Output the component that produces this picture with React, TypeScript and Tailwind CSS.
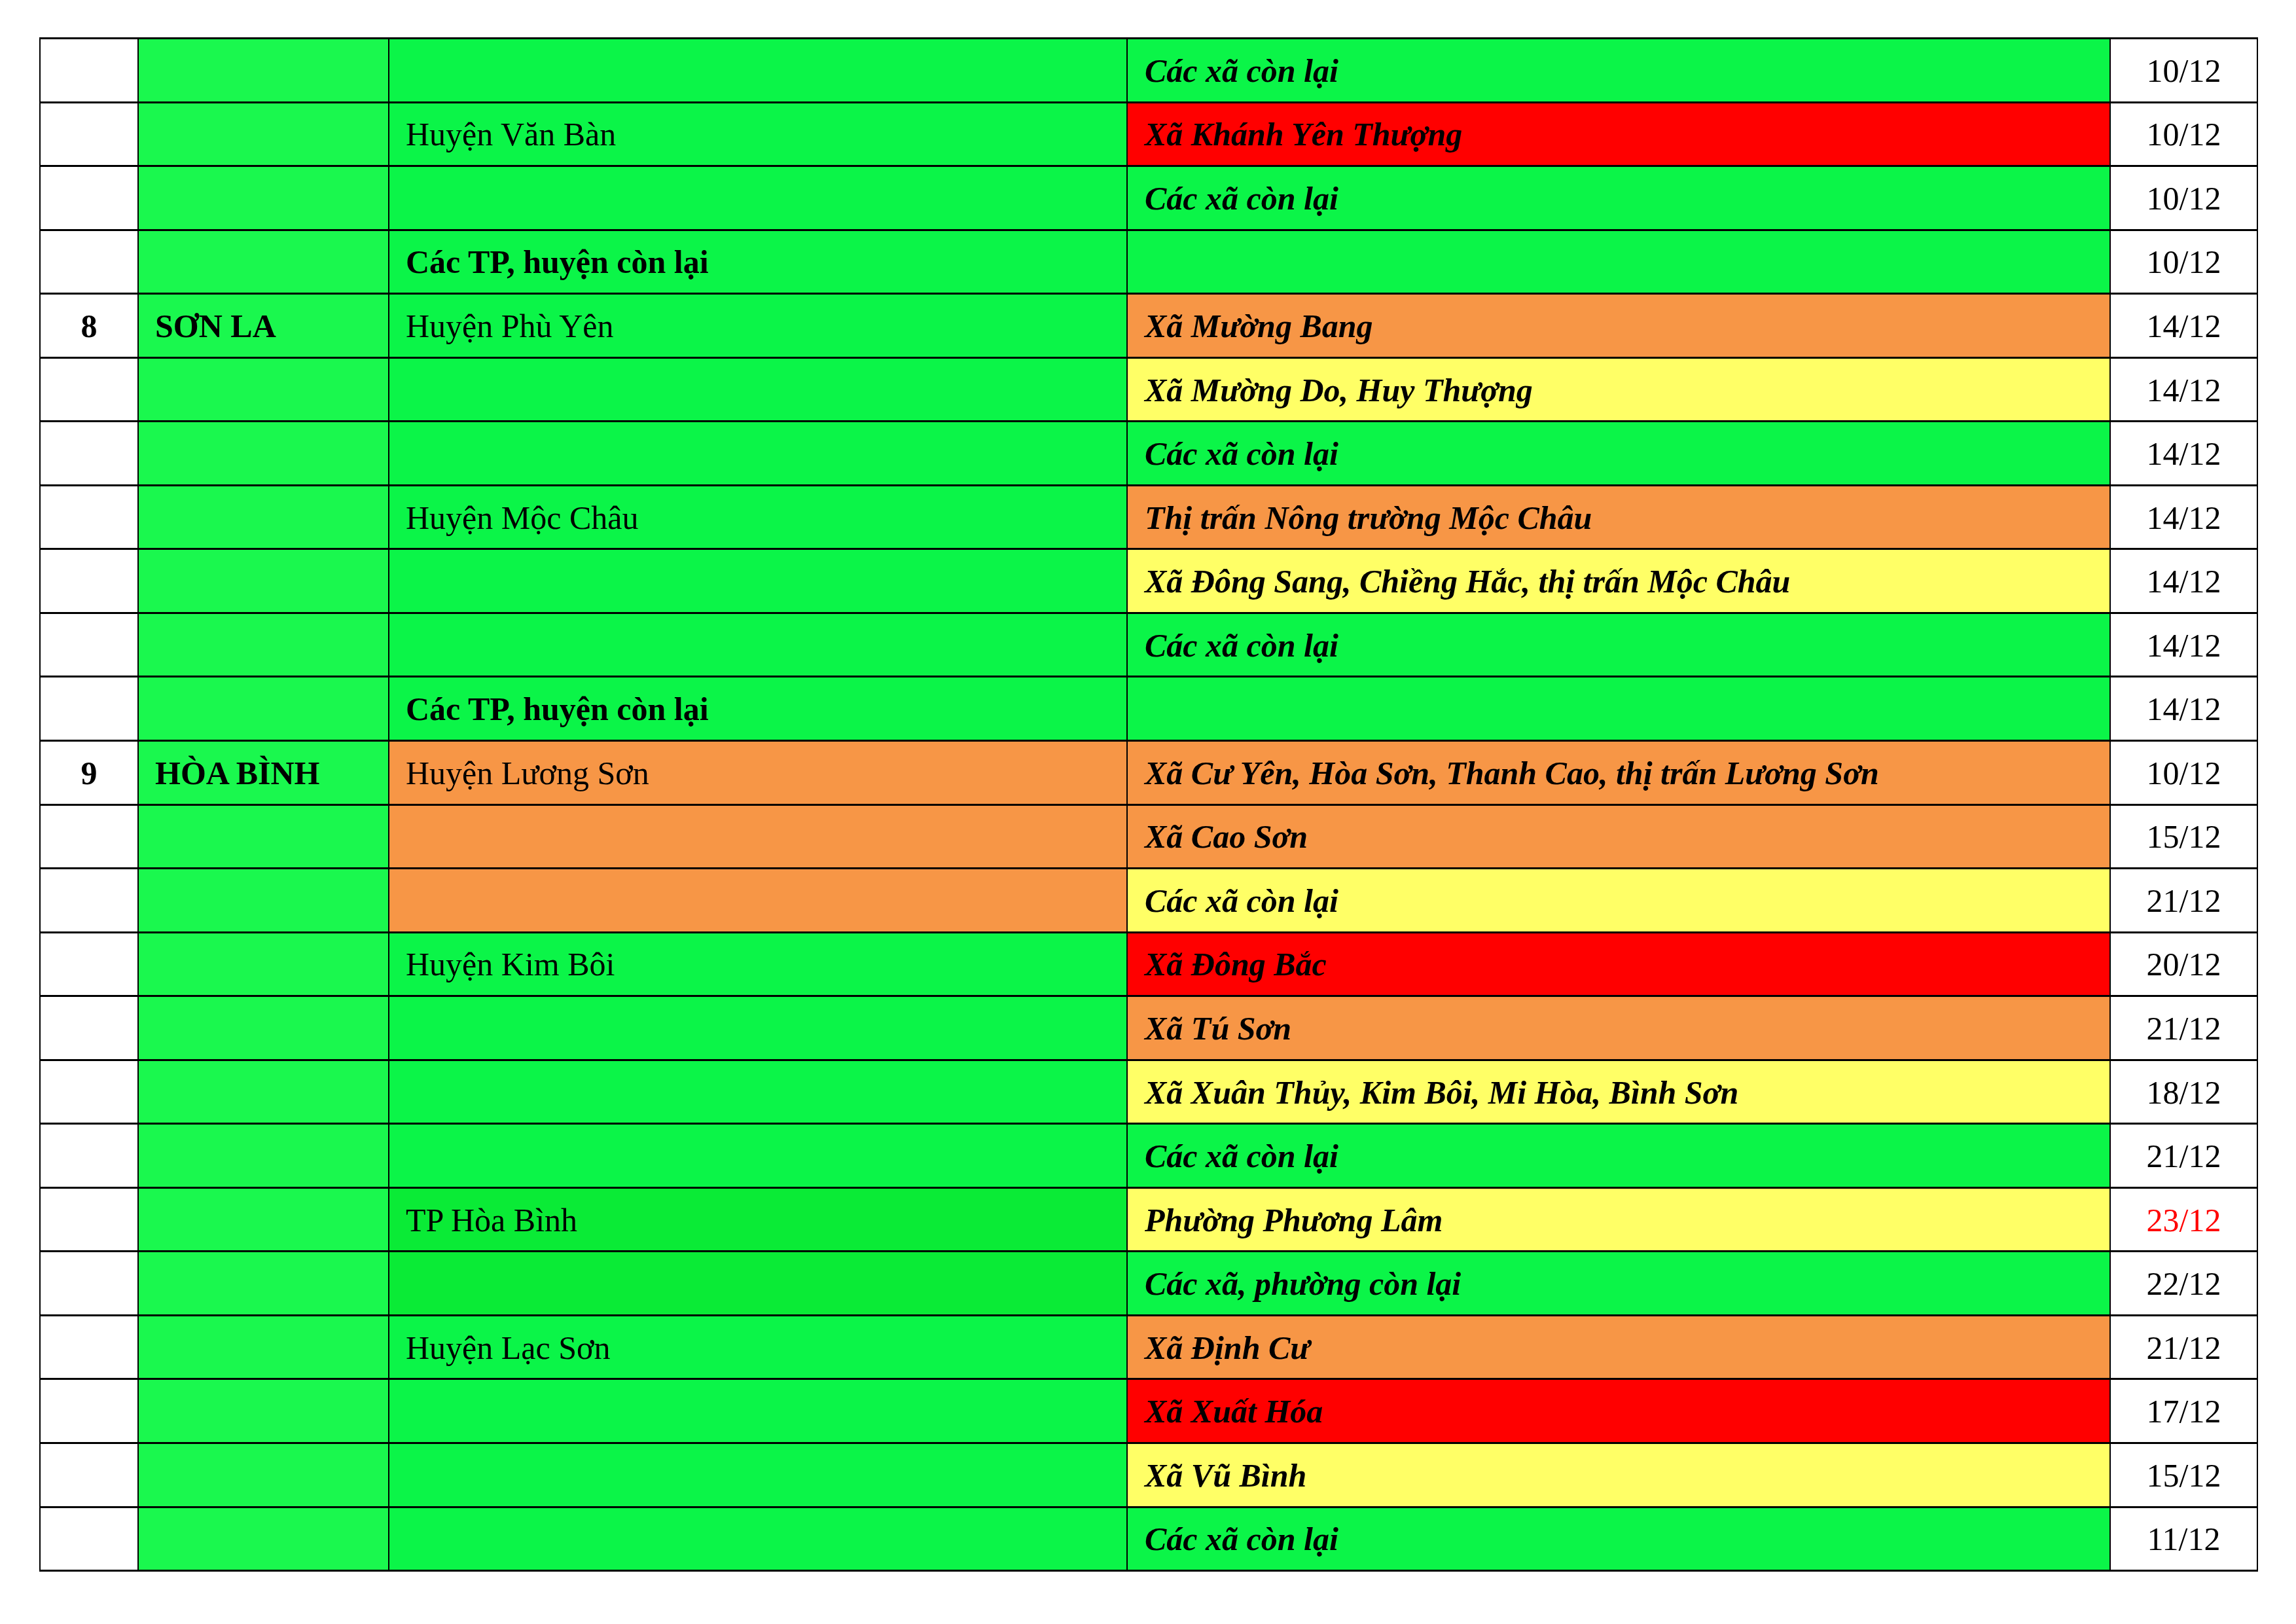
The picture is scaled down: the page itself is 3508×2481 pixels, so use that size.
type Tone = 'green' | 'red' | 'orange' | 'yellow' | 'dark'

type Row = {
  no?: string
  province?: string
  district?: string
  districtBold?: boolean
  districtTone?: Tone
  commune?: string
  tone: Tone
  date: string
  dateRed?: boolean
}

const rows: Row[] = [
  { commune: 'Các xã còn lại', tone: 'green', date: '10/12' },
  { district: 'Huyện Văn Bàn', commune: 'Xã Khánh Yên Thượng', tone: 'red', date: '10/12' },
  { commune: 'Các xã còn lại', tone: 'green', date: '10/12' },
  { district: 'Các TP, huyện còn lại', districtBold: true, tone: 'green', date: '10/12' },
  { no: '8', province: 'SƠN LA', district: 'Huyện Phù Yên', commune: 'Xã Mường Bang', tone: 'orange', date: '14/12' },
  { commune: 'Xã Mường Do, Huy Thượng', tone: 'yellow', date: '14/12' },
  { commune: 'Các xã còn lại', tone: 'green', date: '14/12' },
  { district: 'Huyện Mộc Châu', commune: 'Thị trấn Nông trường Mộc Châu', tone: 'orange', date: '14/12' },
  { commune: 'Xã Đông Sang, Chiềng Hắc, thị trấn Mộc Châu', tone: 'yellow', date: '14/12' },
  { commune: 'Các xã còn lại', tone: 'green', date: '14/12' },
  { district: 'Các TP, huyện còn lại', districtBold: true, tone: 'green', date: '14/12' },
  {
    no: '9',
    province: 'HÒA BÌNH',
    district: 'Huyện Lương Sơn',
    districtTone: 'orange',
    commune: 'Xã Cư Yên, Hòa Sơn, Thanh Cao, thị trấn Lương Sơn',
    tone: 'orange',
    date: '10/12',
  },
  { districtTone: 'orange', commune: 'Xã Cao Sơn', tone: 'orange', date: '15/12' },
  { districtTone: 'orange', commune: 'Các xã còn lại', tone: 'yellow', date: '21/12' },
  { district: 'Huyện Kim Bôi', commune: 'Xã Đông Bắc', tone: 'red', date: '20/12' },
  { commune: 'Xã Tú Sơn', tone: 'orange', date: '21/12' },
  { commune: 'Xã Xuân Thủy, Kim Bôi, Mi Hòa, Bình Sơn', tone: 'yellow', date: '18/12' },
  { commune: 'Các xã còn lại', tone: 'green', date: '21/12' },
  { district: 'TP Hòa Bình', districtTone: 'dark', commune: 'Phường Phương Lâm', tone: 'yellow', date: '23/12', dateRed: true },
  { districtTone: 'dark', commune: 'Các xã, phường còn lại', tone: 'green', date: '22/12' },
  { district: 'Huyện Lạc Sơn', commune: 'Xã Định Cư', tone: 'orange', date: '21/12' },
  { commune: 'Xã Xuất Hóa', tone: 'red', date: '17/12' },
  { commune: 'Xã Vũ Bình', tone: 'yellow', date: '15/12' },
  { commune: 'Các xã còn lại', tone: 'green', date: '11/12' },
]

const toneBg: Record<Tone, string> = {
  green: 'bg-[#0bf548]',
  red: 'bg-[#ff0000]',
  orange: 'bg-[#f79646]',
  yellow: 'bg-[#ffff66]',
  dark: 'bg-[#0aeb36]',
}

export default function App() {
  return (
    <div className="w-[3508px] h-[2481px] bg-white pt-[57px] pl-[60px] font-['Liberation_Serif','Times_New_Roman',serif] text-[50px] text-black">
      <div className="w-[3390px] border-t-[3px] border-l-2 border-black">
        {rows.map((r, i) => (
          <div key={i} className="flex h-[97.55px] border-b-[3px] border-black">
            <div className="w-[150px] shrink-0 border-r-2 border-black bg-white flex items-center justify-center pt-[2px] font-bold">
              {r.no}
            </div>
            <div className="w-[383px] shrink-0 border-r-2 border-black bg-[#1af84e] flex items-center pl-[25px] pt-[2px] font-bold">
              {r.province}
            </div>
            <div
              className={`w-[1128px] shrink-0 border-r-2 border-black flex items-center pl-[25px] pt-[2px] ${
                toneBg[r.districtTone ?? 'green']
              } ${r.districtBold ? 'font-bold' : ''}`}
            >
              {r.district}
            </div>
            <div
              className={`w-[1502px] shrink-0 border-r-2 border-black flex items-center pl-[26px] pt-[2px] font-bold italic ${toneBg[r.tone]}`}
            >
              {r.commune}
            </div>
            <div
              className={`w-[225px] shrink-0 border-r-2 border-black bg-white flex items-center justify-center pt-[2px] ${
                r.dateRed ? 'text-[#ff0000]' : ''
              }`}
            >
              {r.date}
            </div>
          </div>
        ))}
      </div>
    </div>
  )
}
